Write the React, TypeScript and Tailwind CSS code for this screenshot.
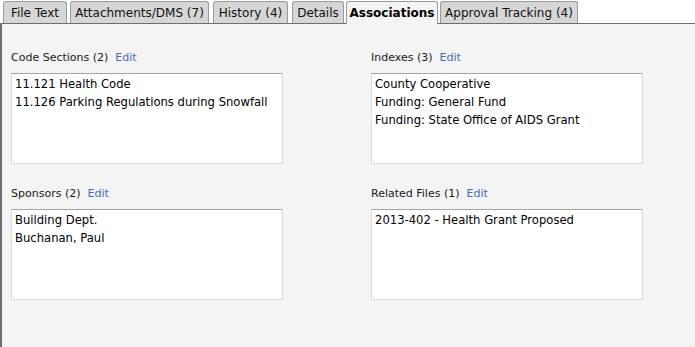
const TABS = [
  { label: "File Text", w: "w-[64px]", ml: "ml-[3px]" },
  { label: "Attachments/DMS (7)", w: "w-[139px]", ml: "ml-[3px]" },
  { label: "History (4)", w: "w-[75px]", ml: "ml-[4px]" },
  { label: "Details", w: "w-[52px]", ml: "ml-[4px]" },
  { label: "Associations", w: "w-[92px]", ml: "ml-[2px]", active: true },
  { label: "Approval Tracking (4)", w: "w-[138px]", ml: "ml-[2px]" },
];

type Section = { title: string; count: number; items: string[] };

const ROWS: Section[][] = [
  [
    {
      title: "Code Sections",
      count: 2,
      items: ["11.121 Health Code", "11.126 Parking Regulations during Snowfall"],
    },
    {
      title: "Indexes",
      count: 3,
      items: ["County Cooperative", "Funding: General Fund", "Funding: State Office of AIDS Grant"],
    },
  ],
  [
    { title: "Sponsors", count: 2, items: ["Building Dept.", "Buchanan, Paul"] },
    { title: "Related Files", count: 1, items: ["2013-402 - Health Grant Proposed"] },
  ],
];

function AssocBox({ section }: { section: Section }) {
  return (
    <div className="w-[360px] shrink-0">
      <div className="flex h-[14px] items-center text-[11px] leading-[14px] text-[#1a1a1a]">
        <span>
          {section.title} ({section.count})
        </span>
        <span className="ml-[7px] text-[#4a6cbc]">Edit</span>
      </div>
      <div className="mt-[8px] h-[91px] w-[272px] border border-[#d6dae2] border-t-[#a5a5a5] bg-white px-[3px] pt-[1px] text-[11.6px] leading-[18px] text-black">
        {section.items.map((item) => (
          <div key={item}>{item}</div>
        ))}
      </div>
    </div>
  );
}

export default function App() {
  return (
    <div
      className="flex h-[347px] w-[695px] flex-col overflow-hidden bg-white"
      style={{ fontFamily: '"DejaVu Sans", Verdana, sans-serif' }}
    >
      <div className="flex h-[23px] items-end pt-[1px]">
        {TABS.map((tab) => (
          <div
            key={tab.label}
            className={`${tab.w} ${tab.ml} flex h-[22px] items-center justify-center rounded-t-[3px] border border-b-0 text-[12px] ${
              tab.active
                ? "relative z-10 -mb-px h-[23px] border-[#9a9a9a] bg-[#f4f4f4] font-bold text-black"
                : "border-[#9a9a9a] bg-[#d6d6d6] text-[#111]"
            }`}
          >
            {tab.label}
          </div>
        ))}
      </div>
      <div className="flex-1 border-t border-l-2 border-[#6e6e6e] bg-[#f4f4f4] pl-[9px] pt-[27px]">
        {ROWS.map((row, i) => (
          <div key={i} className={`flex ${i > 0 ? "mt-[23px]" : ""}`}>
            {row.map((section) => (
              <AssocBox key={section.title} section={section} />
            ))}
          </div>
        ))}
      </div>
    </div>
  );
}
